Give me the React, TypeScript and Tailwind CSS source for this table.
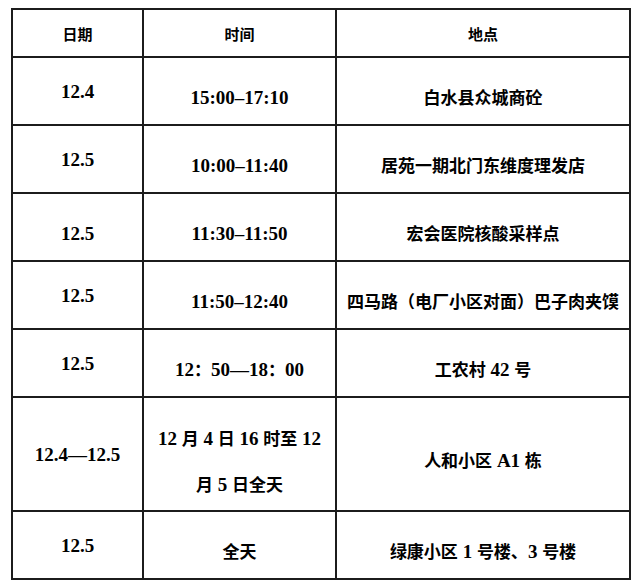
const rows = [
  { date: '12.4', time: '15:00–17:10', place: '白水县众城商砼', shift: true, dateShift: false },
  { date: '12.5', time: '10:00–11:40', place: '居苑一期北门东维度理发店', shift: true, dateShift: false },
  { date: '12.5', time: '11:30–11:50', place: '宏会医院核酸采样点', shift: true, dateShift: true },
  { date: '12.5', time: '11:50–12:40', place: '四马路（电厂小区对面）巴子肉夹馍', shift: true, dateShift: false },
  { date: '12.5', time: '12：50—18：00', place: '工农村 42 号', shift: true, dateShift: false },
  { date: '12.4—12.5', time: '12 月 4 日 16 时至 12\n月 5 日全天', place: '人和小区 A1 栋', shift: true, dateShift: false },
  { date: '12.5', time: '全天', place: '绿康小区 1 号楼、3 号楼', shift: true, dateShift: false },
];

const CJK = /([\u3000-\u303f\u4e00-\u9fff\uff00-\uffef]+)/;

// latin runs stay in the serif, CJK runs get the smaller heiti-like face
function Mixed({ text }: { text: string }) {
  const parts = text.split(CJK);
  return (
    <span>
      {parts.map((p, i) =>
        CJK.test(p) ? (
          <span key={i} className="text-[17px] font-['Noto_Sans_CJK_SC',sans-serif]">
            {p}
          </span>
        ) : (
          <span key={i}>{p}</span>
        )
      )}
    </span>
  );
}

function Cell({ children, shift, className = '' }: { children: React.ReactNode; shift?: boolean; className?: string }) {
  return (
    <div
      className={`bg-white flex items-center justify-center text-center whitespace-nowrap ${shift ? 'pt-[13px]' : ''} ${className}`}
    >
      {children}
    </div>
  );
}

export default function App() {
  return (
    <div className="w-[640px] h-[588px] bg-white pt-[8px] pl-[11px]">
      <div className="w-[620px] bg-[#1c1c1c] p-[2px] grid gap-[2px] grid-cols-[129px_191px_292px] grid-rows-[46px_66px_66px_66px_66px_66px_112px_66px] font-['Liberation_Serif','Noto_Sans_CJK_SC',serif] font-bold text-[19px] leading-none text-black">
        <Cell>
          <span className="text-[15px] font-['Noto_Sans_CJK_SC',sans-serif]">日期</span>
        </Cell>
        <Cell>
          <span className="text-[15px] font-['Noto_Sans_CJK_SC',sans-serif]">时间</span>
        </Cell>
        <Cell>
          <span className="text-[15px] font-['Noto_Sans_CJK_SC',sans-serif]">地点</span>
        </Cell>
        {rows.map((r, i) => (
          <div key={i} className="contents">
            <Cell shift={r.dateShift}>
              <Mixed text={r.date} />
            </Cell>
            <Cell shift={r.shift} className={r.time.includes('\n') ? 'leading-[45px]' : ''}>
              <div className="flex flex-col items-center">
                {r.time.split('\n').map((line, j) => (
                  <div key={j}>
                    <Mixed text={line} />
                  </div>
                ))}
              </div>
            </Cell>
            <Cell shift={r.shift}>
              <Mixed text={r.place} />
            </Cell>
          </div>
        ))}
      </div>
    </div>
  );
}
